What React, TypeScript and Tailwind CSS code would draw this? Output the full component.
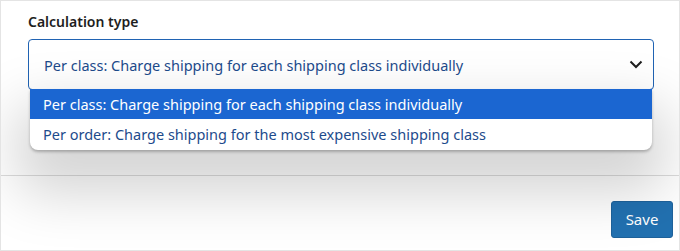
const OPTIONS = [
  "Per class: Charge shipping for each shipping class individually",
  "Per order: Charge shipping for the most expensive shipping class",
];

export default function App() {
  const selected = 0;
  return (
    <div
      className="w-[680px] h-[251px] bg-white border border-[#e4e4e4] overflow-hidden flex flex-col"
      style={{ fontFamily: "'Noto Sans', 'Open Sans', sans-serif" }}
    >
      <div className="h-[175px] shrink-0 border-b border-[#dcdcdc] pl-[27px] pr-[25px] pt-[11px]">
        <div className="text-[14px] font-semibold text-[#1e1e1e] leading-5">Calculation type</div>
        <div className="relative mt-[7px]">
          {/* select box */}
          <div className="h-[51px] border-[1.5px] border-[#2063b3] rounded-[4px] bg-white flex items-center justify-between pl-[15px] pr-[9px] pt-[2px]">
            <span className="text-[14.5px] text-[#1d4b8c]">{OPTIONS[selected]}</span>
            <svg width="14" height="9" viewBox="0 0 14 9" fill="none" className="mr-[1px] mt-[-3px]">
              <path d="M1.5 1.5 L7 7 L12.5 1.5" stroke="#1e1e1e" strokeWidth="2" />
            </svg>
          </div>
          {/* open list */}
          <ul className="absolute z-10 left-[2px] right-[2px] top-[50px] bg-white rounded-b-[8px] overflow-hidden shadow-[0_30px_55px_14px_rgba(0,0,0,0.17),0_2px_3px_rgba(0,0,0,0.25)]">
            {OPTIONS.map((o, i) => (
              <li
                key={o}
                className={
                  i === selected
                    ? "h-[30px] flex items-center pl-[13px] pt-[1px] text-[14.5px] bg-[#1b66d1] text-white"
                    : "h-[31px] flex items-center pl-[13px] text-[14.5px] text-[#1d4b8c]"
                }
              >
                {o}
              </li>
            ))}
          </ul>
        </div>
      </div>
      <div className="flex justify-end pr-[6px] pt-[25px]">
        <button className="w-[62px] h-[37px] rounded-[3px] bg-[#2271b1] border border-[#1e629b] text-white text-[15px]">
          Save
        </button>
      </div>
    </div>
  );
}
